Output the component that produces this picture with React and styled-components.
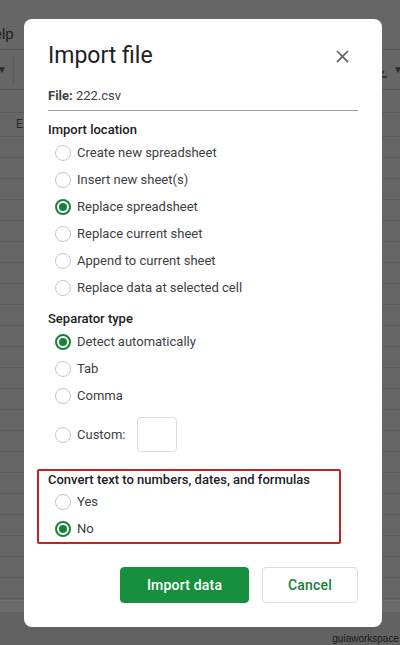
import React from 'react'
import styled, { createGlobalStyle } from 'styled-components'

const GlobalStyle = createGlobalStyle`
    html, body {
        margin: 0;
        padding: 0;
        background: #666666;
    }
    body {
        font-family: Roboto, "Liberation Sans", Arial, sans-serif;
    }
`

const Page = styled.div`
    position: relative;
    width: 400px;
    height: 645px;
    overflow: hidden;
    background: #666666;
`

/* dimmed spreadsheet underneath the dialog */
const Sheet = styled.div`
    display: flex;
    flex-direction: column;
    height: 100%;
`

const MenuBar = styled.div`
    height: 50px;
    box-sizing: border-box;
    border-bottom: 1px solid #5a5a5a;
    padding-top: 24px;
`

const MenuText = styled.span`
    display: inline-block;
    margin-left: -17px;
    font-size: 15px;
    line-height: 20px;
    color: #1e1e1e;
`

const ToolBar = styled.div`
    height: 40px;
    box-sizing: border-box;
    border-bottom: 1px solid #585858;
    display: flex;
    align-items: center;
    justify-content: space-between;
`

const ToolGroup = styled.div`
    display: flex;
    align-items: center;
    gap: 6px;
    margin: ${p => p.$side === 'left' ? '0 0 0 -3px' : '0 -3px 0 0'};
    color: #2a2a2a;
`

const Caret = styled.span`
    font-size: 10px;
    color: #2a2a2a;
`

const ToolDivider = styled.span`
    width: 1px;
    height: 28px;
    background: #5a5a5a;
`

const FormulaBar = styled.div`
    height: 23px;
    box-sizing: border-box;
    border-bottom: 1px solid #5a5a5a;
`

const ColumnHeader = styled.div`
    height: 24px;
    box-sizing: border-box;
    border-bottom: 1px solid #5a5a5a;
    padding-left: 16px;
    font-size: 12px;
    line-height: 23px;
    color: #2a2a2a;
`

const Rows = styled.div`
    flex: 1;
    overflow: hidden;
`

const GridRow = styled.div`
    height: 21px;
    box-sizing: border-box;
    border-bottom: 1px solid #5c5c5c;
`

const TabBar = styled.div`
    height: 45px;
    flex-shrink: 0;
    box-sizing: border-box;
    border-top: 1px solid #727272;
    background: linear-gradient(#6b6b6b 0, #6b6b6b 11px, #626262 11px);
`

/* modal layer */
const Overlay = styled.div`
    position: absolute;
    inset: 0;
    padding: 19px 0 0 24px;
`

const Dialog = styled.div`
    width: 358px;
    box-sizing: border-box;
    padding: 23px 24px 24px;
    background: #ffffff;
    border-radius: 8px;
    color: #3c4043;
`

const Header = styled.div`
    display: flex;
    align-items: center;
    justify-content: space-between;
    height: 28px;
`

const Title = styled.h1`
    margin: 0;
    font-size: 23px;
    line-height: 28px;
    font-weight: 400;
    color: #202124;
`

const CloseButton = styled.button`
    display: flex;
    padding: 0;
    margin-right: 5px;
    border: none;
    background: none;
    color: #5f6368;
    cursor: pointer;
`

const FileRow = styled.div`
    margin-top: 16px;
    padding-bottom: 4px;
    border-bottom: 1px solid #9aa0a6;
    font-size: 13px;
    line-height: 20px;
    color: #3c4043;

    b {
        font-weight: 700;
        color: #3c4043;
    }
`

const SectionTitle = styled.div`
    margin-top: ${p => p.$top || 0}px;
    font-size: 13px;
    line-height: ${p => p.$lh || 18}px;
    font-weight: 500;
    color: #202124;
`

const OptionRow = styled.label`
    display: flex;
    align-items: center;
    gap: 6px;
    box-sizing: border-box;
    height: ${p => p.$height || 27}px;
    padding-left: 7px;
    padding-top: ${p => p.$padTop || 0}px;
    font-size: 13px;
    color: #3c4043;
    cursor: pointer;
`

const Radio = styled.span`
    width: 16px;
    height: 16px;
    box-sizing: border-box;
    border-radius: 50%;
    border: ${p => p.$checked ? '2px solid #188038' : '1px solid #c6c6c6'};
    display: flex;
    align-items: center;
    justify-content: center;
    flex-shrink: 0;

    &::after {
        content: '';
        width: 8px;
        height: 8px;
        border-radius: 50%;
        background: ${p => p.$checked ? '#188038' : 'transparent'};
    }
`

const CustomInput = styled.span`
    width: 40px;
    height: 35px;
    box-sizing: border-box;
    margin-left: 6px;
    border: 1px solid #dadce0;
    border-radius: 4px;
`

const Highlight = styled.div`
    margin: 17px 0 0 -11px;
    width: 304px;
    box-sizing: border-box;
    border: 2px solid #c5221f;
    border-radius: 2px;
    padding: 0 9px;
`

const Footer = styled.div`
    display: flex;
    justify-content: flex-end;
    gap: 13px;
    margin-top: 23px;
`

const Button = styled.button`
    width: ${p => p.$width}px;
    height: 36px;
    box-sizing: border-box;
    border-radius: 4px;
    border: 1px solid ${p => p.$primary ? '#188f3f' : '#dadce0'};
    background: ${p => p.$primary ? '#188f3f' : '#ffffff'};
    color: ${p => p.$primary ? '#ffffff' : '#188038'};
    font-family: Roboto, "Liberation Sans", Arial, sans-serif;
    font-size: 14px;
    font-weight: 500;
    letter-spacing: 0.2px;
    cursor: pointer;
`

const Watermark = styled.span`
    position: absolute;
    right: 1px;
    bottom: 0;
    font-family: "Liberation Sans", Arial, sans-serif;
    font-size: 10px;
    line-height: 12px;
    color: #1a1a1a;
`

const CloseIcon = () => (
    <svg width="21" height="21" viewBox="0 0 24 24" fill="currentColor">
        <path d="M19 6.41L17.59 5 12 10.59 6.41 5 5 6.41 10.59 12 5 17.59 6.41 19 12 13.41 17.59 19 19 17.59 13.41 12z" />
    </svg>
)

const AlignIcon = () => (
    <svg width="12" height="16" viewBox="0 0 12 16" fill="none" stroke="#2a2a2a" strokeWidth="1.6">
        <path d="M6 1v11M3 9l3 3 3-3M0 15h12" />
    </svg>
)

const locations = [
    'Create new spreadsheet',
    'Insert new sheet(s)',
    'Replace spreadsheet',
    'Replace current sheet',
    'Append to current sheet',
    'Replace data at selected cell',
]

const separators = ['Detect automatically', 'Tab', 'Comma']

const Option = ({ checked, children, ...rest }) => (
    <OptionRow {...rest}>
        <Radio $checked={checked} />
        {children}
    </OptionRow>
)

export default function App() {
    return (
        <Page>
            <GlobalStyle />
            <Sheet>
                <MenuBar><MenuText>Help</MenuText></MenuBar>
                <ToolBar>
                    <ToolGroup $side="left">
                        <Caret>▼</Caret>
                        <ToolDivider />
                    </ToolGroup>
                    <ToolGroup $side="right">
                        <AlignIcon />
                        <Caret>▼</Caret>
                    </ToolGroup>
                </ToolBar>
                <FormulaBar />
                <ColumnHeader>E</ColumnHeader>
                <Rows>
                    {Array.from({ length: 24 }, (_, i) => <GridRow key={i} />)}
                </Rows>
                <TabBar />
            </Sheet>

            <Overlay>
                <Dialog>
                    <Header>
                        <Title>Import file</Title>
                        <CloseButton aria-label="Close"><CloseIcon /></CloseButton>
                    </Header>
                    <FileRow><b>File:</b> 222.csv</FileRow>

                    <SectionTitle $top={10}>Import location</SectionTitle>
                    {locations.map((l, i) => (
                        <Option key={l} checked={i === 2}>{l}</Option>
                    ))}

                    <SectionTitle $top={9}>Separator type</SectionTitle>
                    {separators.map((s, i) => (
                        <Option key={s} checked={i === 0}>{s}</Option>
                    ))}
                    <Option $height={43} $padTop={8}>
                        Custom:
                        <CustomInput />
                    </Option>

                    <Highlight>
                        <SectionTitle $lh={17}>Convert text to numbers, dates, and formulas</SectionTitle>
                        <Option>Yes</Option>
                        <Option checked>No</Option>
                    </Highlight>

                    <Footer>
                        <Button $primary $width={129}>Import data</Button>
                        <Button $width={96}>Cancel</Button>
                    </Footer>
                </Dialog>
            </Overlay>
            <Watermark>guiaworkspace</Watermark>
        </Page>
    )
}
